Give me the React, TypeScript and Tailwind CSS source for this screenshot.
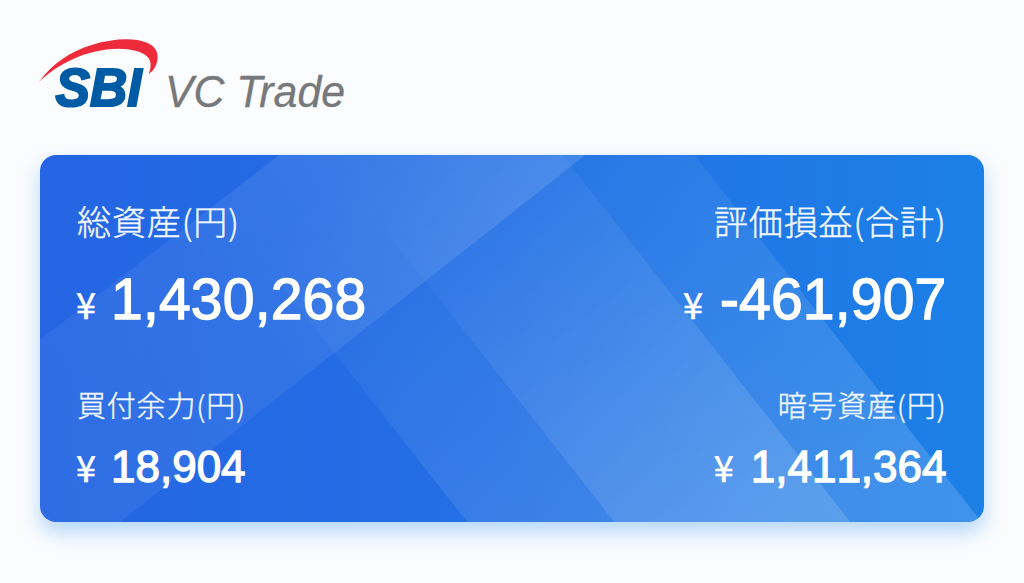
import React from "react";
import clsx from "clsx";

interface BalanceProps {
  label: string;
  value: string;
  large?: boolean;
  alignRight?: boolean;
}

const Logo: React.FC = () => (
  <svg
    width="330"
    height="90"
    viewBox="0 0 330 90"
    role="img"
    aria-label="SBI VC Trade"
    fontFamily="'Liberation Sans', Arial, sans-serif"
    fontStyle="italic"
  >
    <path
      transform="scale(0.33333)"
      d="M27 156C66 101 119 65 187 44C250 25 312 22 351 38C376 48 386 67 382 91C379 109 370 124 356 132C363 114 366 94 352 80C336 63 302 57 267 56C218 56 169 68 125 89C87 107 53 129 27 156Z"
      fill="#ed2b3a"
    />
    <text
      x="25.5"
      y="76"
      fontSize="54.5"
      fontWeight="700"
      fill="#005ba5"
      stroke="#005ba5"
      strokeWidth="2.2"
      textLength="86"
      lengthAdjust="spacingAndGlyphs"
    >
      SBI
    </text>
    <text
      x="135"
      y="76.5"
      fontSize="43.5"
      fill="#77787b"
      stroke="#77787b"
      strokeWidth="0.3"
      textLength="180"
      lengthAdjust="spacingAndGlyphs"
    >
      VC Trade
    </text>
  </svg>
);

const CardPattern: React.FC = () => (
  <svg
    className="absolute inset-0 size-full"
    viewBox="0 0 943 367"
    preserveAspectRatio="none"
    aria-hidden="true"
  >
    <defs>
      <linearGradient id="rising" gradientUnits="userSpaceOnUse" x1="0" y1="367" x2="440" y2="20">
        <stop offset="0" stopColor="#fff" stopOpacity="0.05" />
        <stop offset="0.5" stopColor="#fff" stopOpacity="0.06" />
        <stop offset="1" stopColor="#fff" stopOpacity="0.12" />
      </linearGradient>
      <linearGradient id="falling" gradientUnits="userSpaceOnUse" x1="270" y1="40" x2="590" y2="430">
        <stop offset="0" stopColor="#fff" stopOpacity="0" />
        <stop offset="1" stopColor="#fff" stopOpacity="0.14" />
      </linearGradient>
      <linearGradient id="falling-right" gradientUnits="userSpaceOnUse" x1="330" y1="30" x2="670" y2="450">
        <stop offset="0" stopColor="#fff" stopOpacity="0" />
        <stop offset="1" stopColor="#fff" stopOpacity="0.15" />
      </linearGradient>
    </defs>
    <path d="M239 0H545L80 367H0V185Z" fill="url(#rising)" />
    <path d="M139 0H522L810 367H427Z" fill="url(#falling)" />
    <path d="M286 0H654L941 367H574Z" fill="url(#falling-right)" />
  </svg>
);

const Balance: React.FC<BalanceProps> = ({ label, value, large, alignRight }) => (
  <div className={clsx("flex flex-col", alignRight && "items-end")}>
    <div
      className={clsx(
        "font-['Noto_Sans_CJK_JP',sans-serif] font-light whitespace-nowrap text-[#f2f8ff] [-webkit-text-stroke:0.4px_#f2f8ff]",
        large
          ? "h-[60px] text-[34px] leading-[60px] tracking-[0.9px]"
          : "h-[50px] text-[29px] leading-[52px] tracking-[0.8px]"
      )}
    >
      {label}
    </div>
    <div className={clsx("flex items-baseline whitespace-nowrap", large ? "mt-4" : "mt-3.5")}>
      <span
        className={clsx(
          "-ml-px font-['Noto_Sans_CJK_JP',sans-serif] text-[36px] leading-none [-webkit-text-stroke:0.5px_white]",
          large ? "w-[35px]" : "w-[35px] pb-0.5",
          alignRight && "mr-0.5"
        )}
      >
        ¥
      </span>
      <span
        className={clsx(
          "[font-kerning:none] [-webkit-text-stroke:1.3px_white]",
          large ? "text-[57px] leading-[64px] tracking-[0.2px]" : "text-[44px] leading-[50px]"
        )}
      >
        {value}
      </span>
    </div>
  </div>
);

const App: React.FC = () => {
  return (
    <main className="h-[583px] w-[1024px] overflow-hidden bg-[#fbfcfe] px-[40px] pt-[30px] font-['Liberation_Sans',Arial,sans-serif]">
      <header className="-ml-[10px] h-[125px]">
        <Logo />
      </header>
      <section className="relative h-[367px] w-[943.5px] overflow-hidden rounded-[16px] bg-linear-to-r from-[#2565e3] via-[#2370e5] to-[#1c80e7] text-white shadow-[0_10px_20px_rgba(40,140,235,0.34)]">
        <CardPattern />
        <div className="relative flex h-full flex-col px-[37px] pt-[36px]">
          <div className="flex h-[187px] justify-between">
            <Balance label="総資産(円)" value="1,430,268" large />
            <Balance label="評価損益(合計)" value="-461,907" large alignRight />
          </div>
          <div className="flex justify-between">
            <Balance label="買付余力(円)" value="18,904" />
            <Balance label="暗号資産(円)" value="1,411,364" alignRight />
          </div>
        </div>
      </section>
    </main>
  );
};

export default App;
